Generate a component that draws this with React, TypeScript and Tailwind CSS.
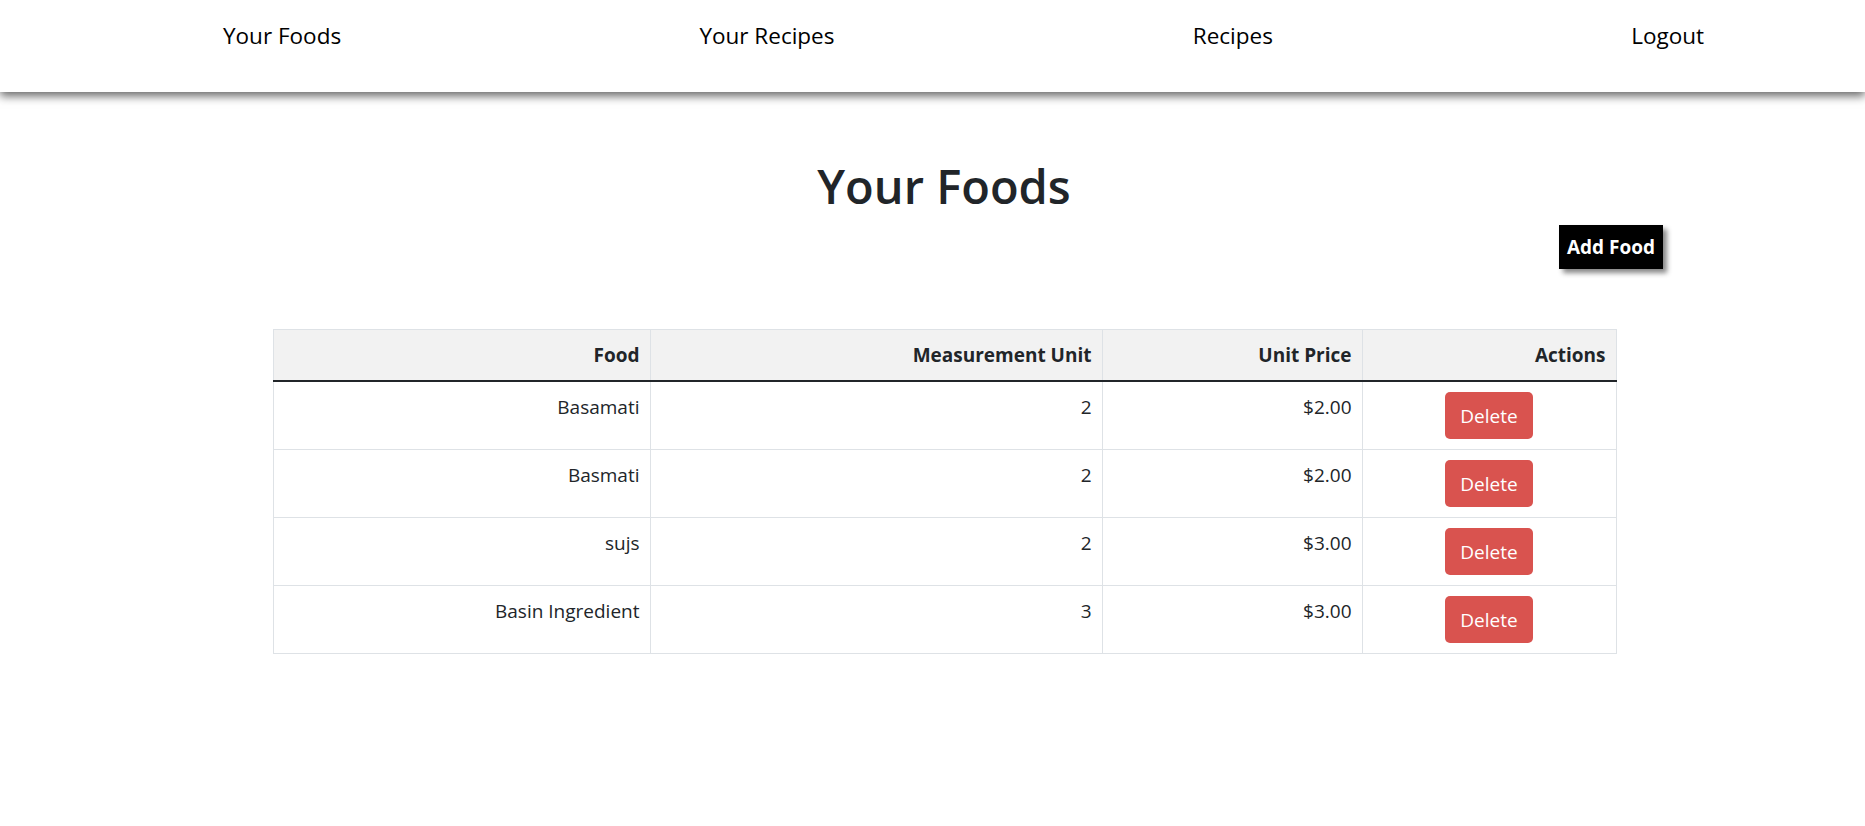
const foods = [
  { name: "Basamati", unit: "2", price: 2 },
  { name: "Basmati", unit: "2", price: 2 },
  { name: "sujs", unit: "2", price: 3 },
  { name: "Basin Ingredient", unit: "3", price: 3 },
];

const navLinks = ["Your Foods", "Your Recipes", "Recipes", "Logout"];

export default function App() {
  return (
    <div className="min-h-[826px] bg-white text-[#212529] [font-family:'Segoe_UI','Open_Sans',sans-serif]">
      <nav className="relative z-10 h-[92px] bg-white shadow-[0_4px_9px_rgba(0,0,0,0.6)]">
        <ul className="flex justify-between pl-[223px] pr-[161px] pt-[21px]">
          {navLinks.map((link) => (
            <li key={link} className="text-[22.5px] leading-[30px] text-black">
              {link}
            </li>
          ))}
        </ul>
      </nav>

      <main className="pl-[23px]">
        <div className="mx-auto w-[1343px]">
          <h1 className="mt-[64px] text-center text-[47px] font-semibold leading-[60px]">Your Foods</h1>
        </div>
        <div className="mt-[9px] flex justify-end pr-[202px]">
          <button className="bg-black px-[8px] py-[7px] text-[19px] font-bold leading-[30px] text-white shadow-[4px_4px_5px_#888]">
            Add Food
          </button>
        </div>

        <div className="mx-auto mt-[60px] w-[1343px]">
          <FoodTable />
        </div>
      </main>
    </div>
  );
}

function FoodTable() {
  return (
    <table className="w-full table-fixed border-collapse border border-[#dee2e6] text-[19px] leading-[30px]">
      <colgroup>
        <col className="w-[377px]" />
        <col className="w-[452px]" />
        <col className="w-[260px]" />
        <col className="w-[254px]" />
      </colgroup>
      <thead className="bg-[#f2f2f2]">
        <tr className="border-b-[2.5px] border-b-[#212529]">
          <th className="border-r border-[#dee2e6] px-[10px] py-[10px] text-right font-bold">Food</th>
          <th className="border-r border-[#dee2e6] px-[10px] py-[10px] text-right font-bold">Measurement Unit</th>
          <th className="border-r border-[#dee2e6] px-[10px] py-[10px] text-right font-bold">Unit Price</th>
          <th className="px-[10px] py-[10px] text-right font-bold">Actions</th>
        </tr>
      </thead>
      <tbody>
        {foods.map((food, index) => (
          <tr key={`${food.name}-${index}`} className="border-b border-[#dee2e6]">
            <td className="border-r border-[#dee2e6] px-[10px] py-[10px] text-right align-top">{food.name}</td>
            <td className="border-r border-[#dee2e6] px-[10px] py-[10px] text-right align-top">{food.unit}</td>
            <td className="border-r border-[#dee2e6] px-[10px] py-[10px] text-right align-top">${food.price.toFixed(2)}</td>
            <td className="px-[10px] py-[10px] text-center align-top">
              <button className="rounded-[5px] bg-[#d9534f] px-[15px] py-[8.5px] text-[19px] leading-[30px] text-white">
                Delete
              </button>
            </td>
          </tr>
        ))}
      </tbody>
    </table>
  );
}
